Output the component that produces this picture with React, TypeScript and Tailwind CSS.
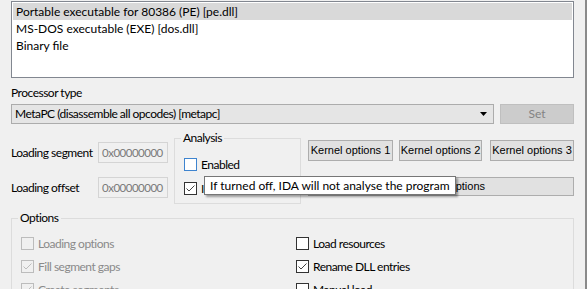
import React from "react";

function Box({ checked, disabled, focus }: { checked?: boolean; disabled?: boolean; focus?: boolean }) {
  const cls = disabled
    ? "border-[#bcbcbc] bg-[#f0f0f0]"
    : focus
    ? "border-[#3e84cf] bg-white"
    : "border-[#333333] bg-white";
  return (
    <span className={`w-[13px] h-[13px] shrink-0 border ${cls} flex items-center justify-center`}>
      {checked && (
        <svg width="11" height="11" viewBox="0 0 11 11">
          <path d="M1.5 5.5 L4 8 L9.5 2.5" stroke={disabled ? "#bcbcbc" : "#444444"} strokeWidth="1" fill="none" />
        </svg>
      )}
    </span>
  );
}

function Check({
  label,
  checked,
  disabled,
  focus,
}: {
  label: string;
  checked?: boolean;
  disabled?: boolean;
  focus?: boolean;
}) {
  return (
    <div className="flex items-center h-[13px] gap-[4px] whitespace-nowrap">
      <Box checked={checked} disabled={disabled} focus={focus} />
      <span className={disabled ? "text-[#8a8a8a]" : "text-black"}>{label}</span>
    </div>
  );
}

function Field({ label, value }: { label: string; value: string }) {
  return (
    <div className="flex items-center h-[21px]">
      <span className="w-[87px] whitespace-nowrap">{label}</span>
      <div className="w-[70px] h-[21px] border border-[#d4d4d4] bg-[#f0f0f0] flex items-center pl-[3px] text-[#7a7a7a] text-[11.5px]">
        {value}
      </div>
    </div>
  );
}

export default function App() {
  return (
    <div className="w-[587px] h-[289px] overflow-hidden bg-[#f0f0f0] border-r-2 border-[#8a8a8a] relative font-['Lato',sans-serif] text-[12px] tracking-[-0.5px] leading-none text-black">
      <div className="pl-[11px] pt-[1px] w-[574px]">
        {/* list box */}
        <div className="h-[77px] border border-[#828790] bg-white p-[1px] tracking-normal">
          <div className="h-[17px] flex items-center pl-[3px] bg-[#d9d9d9]">Portable executable for 80386 (PE) [pe.dll]</div>
          <div className="h-[17px] flex items-center pl-[3px]">MS-DOS executable (EXE) [dos.dll]</div>
          <div className="h-[17px] flex items-center pl-[3px]">Binary file</div>
        </div>

        <div className="mt-[8px] h-[13px] flex items-center">Processor type</div>

        <div className="mt-[5px] flex">
          <div className="w-[483px] h-[20px] border border-[#acacac] bg-[#e5e5e5] flex items-center justify-between pl-[3px] pr-[6px]">
            <span>MetaPC (disassemble all opcodes) [metapc]</span>
            <svg width="7" height="4" viewBox="0 0 7 4">
              <path d="M0 0 H7 L3.5 4 Z" fill="#000" />
            </svg>
          </div>
          <div className="ml-[6px] w-[74px] h-[20px] border border-[#bfbfbf] bg-[#cccccc] flex items-center justify-center text-[#838383] tracking-normal">
            Set
          </div>
        </div>

        {/* middle */}
        <div className="flex">
          <div className="w-[157px] pt-[18px] flex flex-col gap-[14px]">
            <Field label="Loading segment" value="0x00000000" />
            <Field label="Loading offset" value="0x00000000" />
          </div>

          <fieldset className="ml-[6px] mt-[7px] w-[127px] h-[73px] border border-[#dcdcdc] pl-[9px] pt-[13px]">
            <legend className="ml-[-3px] px-[2px] leading-[14px]">Analysis</legend>
            <div className="flex flex-col gap-[11px]">
              <Check label="Enabled" focus />
              <Check label="Indicator enabled" checked />
            </div>
          </fieldset>

          <div className="ml-[7px] w-[266px] pt-[16px] font-['Liberation_Sans',sans-serif] text-[11px] tracking-normal">
            <div className="flex">
              <div className="w-[85px] h-[21px] border border-[#adadad] bg-[#e1e1e1] flex items-center justify-center">Kernel options 1</div>
              <div className="ml-[6px] w-[83px] h-[21px] border border-[#adadad] bg-[#e1e1e1] flex items-center justify-center">Kernel options 2</div>
              <div className="ml-[8px] w-[84px] h-[21px] border border-[#adadad] bg-[#e1e1e1] flex items-center justify-center">Kernel options 3</div>
            </div>
            <div className="mt-[16px] h-[19px] border border-[#adadad] bg-[#e1e1e1] flex items-center justify-center">Processor options</div>
          </div>
        </div>

        <fieldset className="mt-[7px] border border-[#dcdcdc] pl-[9px] pt-[12px] pb-[10px]">
          <legend className="ml-[-3px] px-[2px] leading-[14px]">Options</legend>
          <div className="grid grid-cols-[275px_1fr] gap-y-[10px]">
            <Check label="Loading options" disabled />
            <Check label="Load resources" />
            <Check label="Fill segment gaps" checked disabled />
            <Check label="Rename DLL entries" checked />
            <Check label="Create segments" checked disabled />
            <Check label="Manual load" />
            <Check label="Create FLAT group" checked disabled />
            <Check label="Create imports segment" checked />
          </div>
        </fieldset>
      </div>

      <div className="absolute left-[204px] top-[176px] h-[19px] px-[5px] border border-[#767676] bg-white flex items-center whitespace-nowrap tracking-normal shadow-[2px_2px_2px_rgba(0,0,0,0.35)]">
        If turned off, IDA will not analyse the program
      </div>
    </div>
  );
}
